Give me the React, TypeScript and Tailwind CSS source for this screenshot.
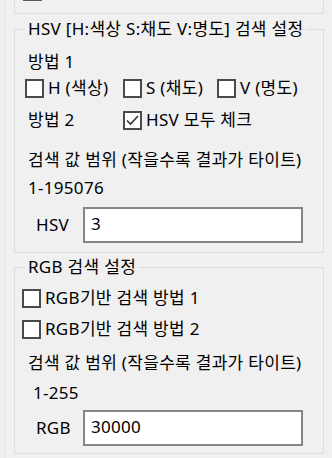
const font = { fontFamily: '"Noto Sans", "Noto Sans CJK KR", sans-serif' }

export default function App() {
  return (
    <div className="w-[332px] h-[458px] bg-[#f0f0f0] overflow-hidden text-[17px] tracking-[0.3px] text-black leading-[20px]" style={font}>
      <div className="ml-[4px] h-full border-l border-[#e4e4e4] pl-[9px] pr-[8px]">
        {/* tail of the group above */}
        <div className="h-[14px] border-x border-b border-[#dcdcdc] overflow-hidden">
          <div className="ml-[8px] mt-[-18px] w-[19px] h-[19px] border-2 border-[#5a5a5a] bg-white" />
        </div>

        <GroupBox title="HSV [H:색상 S:채도 V:명도] 검색 설정" className="mt-[5px] pb-[9px]">
          <div className="mt-[13px] pl-[13px] h-[20px]">방법 1</div>
          <div className="mt-[6px] pl-[10px] flex items-center h-[20px]">
            <Check label="H (색상)" className="w-[98px]" />
            <Check label="S (채도)" className="w-[94px]" />
            <Check label="V (명도)" />
          </div>
          <div className="mt-[12px] pl-[13px] flex items-center h-[20px]">
            <span className="w-[95px]">방법 2</span>
            <Check label="HSV 모두 체크" checked />
          </div>
          <div className="mt-[20px] pl-[13px] h-[20px]">검색 값 범위 (작을수록 결과가 타이트)</div>
          <div className="mt-[8px] pl-[13px] h-[20px]">1-195076</div>
          <Field label="HSV" value="3" className="mt-[9px]" />
        </GroupBox>

        <GroupBox title="RGB 검색 설정" className="mt-[4px] pb-[7px]">
          <div className="mt-[11px] pl-[7px] flex items-center h-[20px]">
            <Check label="RGB기반 검색 방법 1" />
          </div>
          <div className="mt-[11px] pl-[7px] flex items-center h-[20px]">
            <Check label="RGB기반 검색 방법 2" />
          </div>
          <div className="mt-[14px] pl-[13px] h-[20px]">검색 값 범위 (작을수록 결과가 타이트)</div>
          <div className="mt-[10px] pl-[18px] h-[20px]">1-255</div>
          <Field label="RGB" value="30000" className="mt-[7px]" />
        </GroupBox>
      </div>
    </div>
  )
}

function GroupBox({ title, className, children }: { title: string, className?: string, children: React.ReactNode }) {
  return (
    <fieldset className={`border border-[#dcdcdc] ${className ?? ''}`}>
      <legend className="ml-[10px] px-[3px] h-[20px] leading-[20px]">{title}</legend>
      {children}
    </fieldset>
  )
}

function Check({ label, checked, className }: { label: string, checked?: boolean, className?: string }) {
  return (
    <label className={`flex items-center gap-[4px] ${className ?? ''}`}>
      <span className="w-[19px] h-[19px] shrink-0 border-2 border-[#4a4a4a] bg-white grid place-content-center">
        {checked && (
          <svg width="15" height="15" viewBox="0 0 15 15" fill="none">
            <path d="M2 7.5l3.5 3.5L13 3" stroke="#333" strokeWidth="1.6" />
          </svg>
        )}
      </span>
      <span className="whitespace-nowrap">{label}</span>
    </label>
  )
}

function Field({ label, value, className }: { label: string, value: string, className?: string }) {
  return (
    <div className={`flex items-center pl-[21px] ${className ?? ''}`}>
      <span className="w-[47px]">{label}</span>
      <div className="w-[220px] h-[36px] border-2 border-[#858585] bg-white pl-[6px] pt-[5px]">{value}</div>
    </div>
  )
}
